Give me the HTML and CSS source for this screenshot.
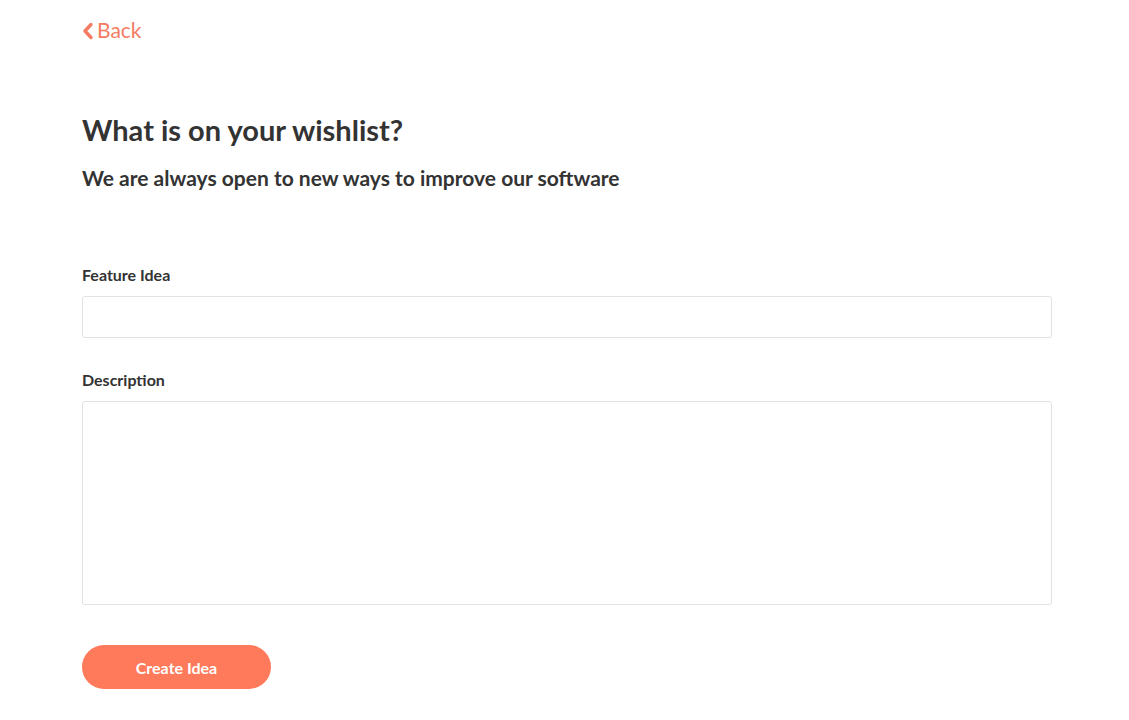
FILE: index.html
```html
<!DOCTYPE html>
<html>
<head>
<meta charset="utf-8">
<link rel="stylesheet" href="styles.css">
</head>
<body>
<div class="page">
  <a class="back" href="#"><svg class="chev" width="12" height="18" viewBox="0 0 12 18"><path d="M9 2.5 L3 9 L9 15.5" fill="none" stroke="currentColor" stroke-width="3.4" stroke-linecap="round" stroke-linejoin="round"/></svg>Back</a>
  <h1 class="title">What is on your wishlist?</h1>
  <h2 class="subtitle">We are always open to new ways to improve our software</h2>
  <form class="form">
    <label class="label">Feature Idea</label>
    <input class="input" type="text">
    <label class="label label-desc">Description</label>
    <textarea class="textarea"></textarea>
    <button class="btn" type="button">Create Idea</button>
  </form>
</div>
</body>
</html>
```
FILE: styles.css
```css
html, body { margin: 0; padding: 0; background: #fff; }
body { font-family: Lato, "Open Sans", sans-serif; color: #333; }
.page { padding: 17px 0 0 82px; width: 970px; }
.back { display: inline-flex; align-items: center; gap: 3px; color: #f47c63; font-size: 21px; text-decoration: none; line-height: 26px; }
.chev { margin-top: 1px; }
.title { margin: 70px 0 0; font-size: 29px; font-weight: 700; line-height: 34px; }
.subtitle { margin: 18px 0 0; font-size: 21px; font-weight: 700; line-height: 26px; color: #333; }
.form { display: flex; flex-direction: column; align-items: flex-start; margin-top: 74px; }
.label { font-size: 16px; font-weight: 700; line-height: 20px; }
.input { box-sizing: border-box; width: 970px; height: 42px; margin-top: 11px; border: 1px solid #e2e2e2; border-radius: 3px; font: inherit; }
.label-desc { margin-top: 32px; }
.textarea { box-sizing: border-box; width: 970px; height: 204px; margin-top: 11px; border: 1px solid #e2e2e2; border-radius: 3px; resize: none; font: inherit; }
.btn { margin-top: 40px; width: 189px; height: 44px; border: none; border-radius: 22px; background: #ff7a5b; color: #fff; font-family: Lato, sans-serif; font-size: 16px; font-weight: 700; }
```
